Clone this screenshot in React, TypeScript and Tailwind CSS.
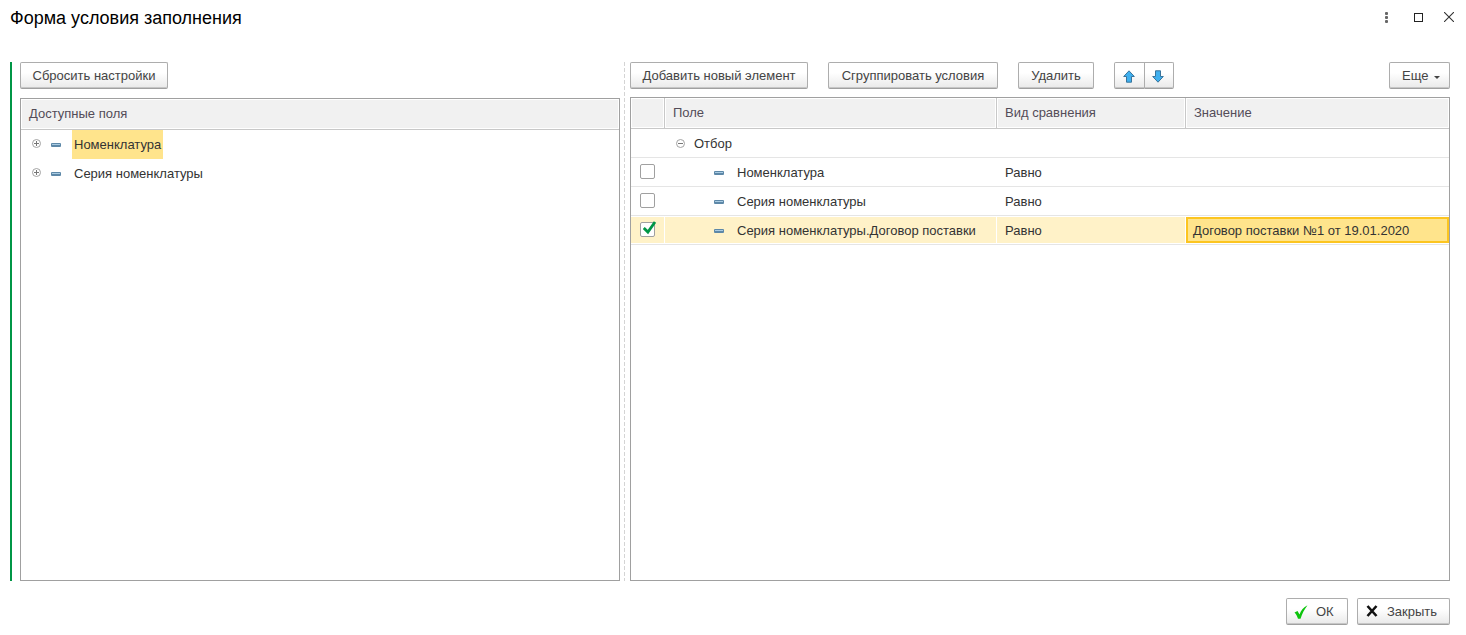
import React, { useState } from 'react';

interface Condition {
  id: number;
  field: string;
  comparison: string;
  value: string;
}

const fields = ['Номенклатура', 'Серия номенклатуры'];

const conditions: Condition[] = [
  { id: 1, field: 'Номенклатура', comparison: 'Равно', value: '' },
  { id: 2, field: 'Серия номенклатуры', comparison: 'Равно', value: '' },
  { id: 3, field: 'Серия номенклатуры.Договор поставки', comparison: 'Равно', value: 'Договор поставки №1 от 19.01.2020' },
];

const buttonStyle =
  'flex h-[27px] shrink-0 items-center border border-[#adadad] border-b-[#a0a0a0] bg-linear-to-b from-white from-40% to-[#e9e9e9] pt-px whitespace-nowrap text-[#444444] shadow-[inset_0_-1px_0_#c6c6c6]';

// Expand / collapse mark of a tree node
const TreeToggle: React.FC<{ open?: boolean; label: string }> = ({ open, label }) => (
  <button type="button" aria-label={label} className="mb-[2px] shrink-0">
    <svg width="9" height="9" viewBox="0 0 9 9" fill="none" className="block">
      <circle cx="4.5" cy="4.5" r="4" stroke="#a3a3a3" />
      <path d={open ? 'M2 4.5h5' : 'M2 4.5h5M4.5 2v5'} stroke="#777777" />
    </svg>
  </button>
);

const FieldIcon = () => (
  <svg width="10" height="4" viewBox="0 0 10 4" className="block shrink-0">
    <rect width="10" height="4" rx="1" fill="#5d88a8" />
    <rect x="1" y="1" width="8" height="1" fill="#a9cbe2" />
  </svg>
);

const ArrowIcon: React.FC<{ down?: boolean }> = ({ down }) => (
  <svg width="12" height="13" viewBox="0 0 12 13" className={down ? 'block rotate-180' : 'block'}>
    <path d="M6 .8 11.3 6.5H8.5v5.7h-5V6.5H.7z" fill="#3fb0ef" stroke="#38749c" strokeLinejoin="round" />
  </svg>
);

const TitleBar = () => (
  <header className="flex h-9 items-center justify-between pr-3 pl-[10px]">
    <h1 className="text-lg text-black">Форма условия заполнения</h1>
    <div className="mb-[2px] flex items-center gap-5">
      <button type="button" aria-label="Меню" className="flex w-4 justify-center">
        <svg width="3" height="11" viewBox="0 0 3 11" fill="#666666">
          <rect width="3" height="3" rx="1" />
          <rect y="4" width="3" height="3" rx="1" />
          <rect y="8" width="3" height="3" rx="1" />
        </svg>
      </button>
      <button type="button" aria-label="Развернуть" className="w-[10px]">
        <svg width="9" height="9" viewBox="0 0 9 9" fill="none" className="block">
          <rect x=".5" y=".5" width="8" height="8" stroke="#222222" />
        </svg>
      </button>
      <button type="button" aria-label="Закрыть окно">
        <svg width="10" height="10" viewBox="0 0 10 10" fill="none" className="block">
          <path d="M0 0l10 10M10 0L0 10" stroke="#333333" strokeWidth="1.1" />
        </svg>
      </button>
    </div>
  </header>
);

const AvailableFields = () => {
  const [current, setCurrent] = useState(0);

  return (
    <section className="flex min-w-0 flex-[600] flex-col gap-[9px] border-l-2 border-[#009646] pl-2">
      <div className="flex">
        <button type="button" className={`${buttonStyle} w-[148px] justify-center rounded-[2px]`}>Сбросить настройки</button>
      </div>
      <div className="flex-1 border border-[#a0a0a0]">
        <div className="border-b border-[#c8c8c8] p-px">
          <h2 className="flex h-7 items-center bg-[#f1f1f1] px-[7px] text-[#534c58]">Доступные поля</h2>
        </div>
        <ul>
          {fields.map((name, i) => (
            <li key={name} className="flex h-[29px] items-center pl-[11px]">
              <TreeToggle label={name} />
              <span className="w-[10px]" />
              <FieldIcon />
              <span className="w-[11px]" />
              <button
                type="button"
                onClick={() => setCurrent(i)}
                className={`h-full px-[2px] text-[#333333] ${i === current ? 'bg-[#ffe48c]' : ''}`}
              >
                {name}
              </button>
            </li>
          ))}
        </ul>
      </div>
    </section>
  );
};

const ConditionsTable = () => {
  const [checked, setChecked] = useState<number[]>([3]);
  const [current, setCurrent] = useState(3);

  const toggle = (id: number) => {
    setChecked(checked.includes(id) ? checked.filter((c) => c !== id) : [...checked, id]);
  };

  return (
    <div className="flex-1 border border-[#a0a0a0]">
      <table className="w-full table-fixed border-separate border-spacing-0 text-left text-[#333333]">
        <colgroup>
          <col className="w-[34px]" />
          <col className="w-[332px]" />
          <col className="w-[189px]" />
          <col />
        </colgroup>
        <thead>
          <tr>
            {['', 'Поле', 'Вид сравнения', 'Значение'].map((title) => (
              <th key={title} className="border-r border-b border-[#c8c8c8] p-px font-normal text-[#534c58] last:border-r-0">
                <div className="flex h-7 items-center bg-[#f1f1f1] px-[7px]">{title}</div>
              </th>
            ))}
          </tr>
        </thead>
        <tbody>
          <tr>
            <td className="border-b border-[#e5e5e5] p-0" />
            <td colSpan={3} className="border-b border-[#e5e5e5] p-0">
              <div className="flex h-7 items-center gap-[9px] pt-[2px] pl-[11px]">
                <TreeToggle open label="Отбор" />
                <span>Отбор</span>
              </div>
            </td>
          </tr>
          {conditions.map((row) => {
            const active = row.id === current;
            const fill = active ? 'bg-[#fff2c8]' : '';
            return (
              <tr key={row.id} onClick={() => setCurrent(row.id)}>
                <td className="border-b border-[#e5e5e5] py-px pr-px pl-0">
                  <div className={`flex h-[26px] items-start pt-[5px] pl-[9px] ${fill}`}>
                    <label className="relative block">
                      <input
                        type="checkbox"
                        aria-label={row.field}
                        checked={checked.includes(row.id)}
                        onChange={() => toggle(row.id)}
                        className="block size-[15px] appearance-none rounded-[2px] border border-[#a0a0a0] bg-white"
                      />
                      {checked.includes(row.id) && (
                        <svg width="14" height="14" viewBox="0 0 14 14" fill="none" className="pointer-events-none absolute -top-px left-[3px]">
                          <path d="M.8 7l4.100 4L12 1" stroke="#009646" strokeWidth="2.8" />
                        </svg>
                      )}
                    </label>
                  </div>
                </td>
                <td className="border-b border-[#e5e5e5] py-px pr-px pl-0">
                  <div className={`flex h-[26px] items-center gap-[13px] pt-[2px] pl-[49px] whitespace-nowrap ${fill}`}>
                    <FieldIcon />
                    <span>{row.field}</span>
                  </div>
                </td>
                <td className="border-b border-[#e5e5e5] py-px pr-px pl-0">
                  <div className={`flex h-[26px] items-center pt-[2px] pl-2 ${fill}`}>{row.comparison}</div>
                </td>
                <td className="border-b border-[#e5e5e5] px-0 py-px">
                  <div className={`flex h-[26px] items-center truncate border-2 pt-[2px] pl-[5px] ${active ? 'border-[#fcc521] bg-[#ffe48c]' : 'border-transparent'}`}>
                    {row.value}
                  </div>
                </td>
              </tr>
            );
          })}
        </tbody>
      </table>
    </div>
  );
};

const Conditions = () => (
  <section className="flex min-w-0 flex-[820] flex-col gap-2">
    <div className="flex gap-5">
      <button type="button" className={`${buttonStyle} w-[178px] justify-center rounded-[2px]`}>Добавить новый элемент</button>
      <button type="button" className={`${buttonStyle} w-[170px] justify-center rounded-[2px]`}>Сгруппировать условия</button>
      <button type="button" className={`${buttonStyle} w-[76px] justify-center rounded-[2px]`}>Удалить</button>
      <div className="flex">
        <button type="button" aria-label="Переместить вверх" className={`${buttonStyle} w-[31px] rounded-l-[2px] pl-2`}>
          <ArrowIcon />
        </button>
        <button type="button" aria-label="Переместить вниз" className={`${buttonStyle} w-[29px] rounded-r-[2px] border-l-0 pl-[7px]`}>
          <ArrowIcon down />
        </button>
      </div>
      <button type="button" className={`${buttonStyle} ml-auto w-[61px] gap-[6px] rounded-[2px] pl-3`}>
        <span>Еще</span>
        <svg width="6" height="3" viewBox="0 0 6 3" fill="#444444" className="mt-[2px]">
          <path d="M0 0h6L3 3z" />
        </svg>
      </button>
    </div>
    <ConditionsTable />
  </section>
);

const App: React.FC = () => (
  <div className="flex min-h-screen flex-col bg-white font-['Liberation_Sans',Arial,sans-serif] text-[13px] leading-4">
    <TitleBar />
    <main className="mt-[26px] flex flex-1 pr-4 pl-[10px]">
      <AvailableFields />
      <div className="flex w-[10px] shrink-0 pl-1">
        <svg width="1" height="100%" className="h-full w-px">
          <line x1=".5" y1="0" x2=".5" y2="100%" stroke="#d4d4d4" strokeDasharray="4 2" />
        </svg>
      </div>
      <Conditions />
    </main>
    <footer className="flex justify-end gap-[9px] pt-[17px] pr-4 pb-[10px]">
      <button type="button" className={`${buttonStyle} w-[62px] gap-2 rounded-[2px] pl-[7px]`}>
        <svg width="14" height="14" viewBox="0 0 14 14">
          <path d="M.5 7.500L3.500 6l2 3.500C7 5.500 9.500 2.300 13.500.3 10.300 4.500 8.300 8.500 6.500 13.700H4C3.300 11.300 2 9 .5 7.500z" fill="#0cc40c" />
        </svg>
        <span>ОК</span>
      </button>
      <button type="button" className={`${buttonStyle} w-[93px] gap-[9px] rounded-[2px] pl-2`}>
        <svg width="12" height="12" viewBox="0 0 12 12" fill="none" className="mb-[2px]">
          <path d="M1.500 1l9 10M10.500 1l-9 10" stroke="#111111" strokeWidth="2.600" />
        </svg>
        <span>Закрыть</span>
      </button>
    </footer>
  </div>
);

export default App;
